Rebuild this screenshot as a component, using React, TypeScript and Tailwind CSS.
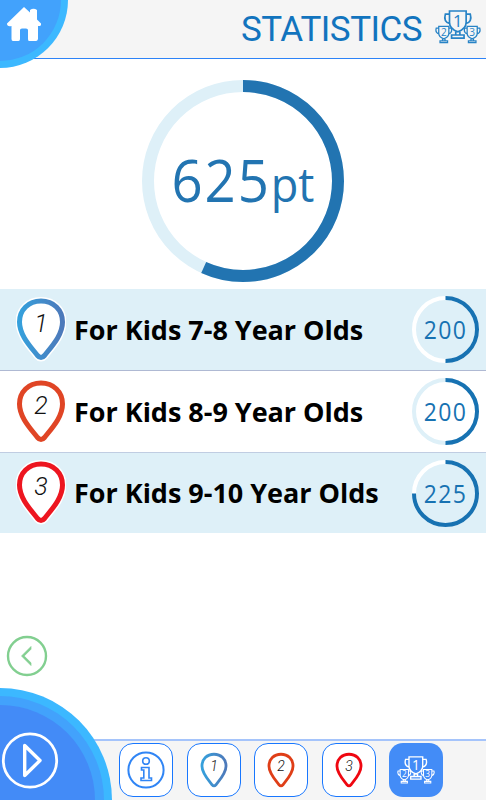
const SANS = "font-['Open_Sans','Noto_Sans',sans-serif]";

function Pin({ n, color, className, halo, gradient }: { n: number; color: string; className: string; halo?: boolean; gradient?: string }) {
  const d = "M25 4C12.4 4 3.5 13 3.5 25C3.5 38 14 49 21.5 58.5Q25 62.5 28.5 58.5C36 49 46.5 38 46.5 25C46.5 13 37.6 4 25 4Z";
  return (
    <svg viewBox="0 0 50 66" className={className}>
      {gradient && (
        <defs>
          <linearGradient id={gradient} x1="0" x2="1" y1="0" y2="0">
            <stop offset="0" stopColor="#35a0dc" />
            <stop offset="1" stopColor="#4d79ba" />
          </linearGradient>
        </defs>
      )}
      {halo && <path d={d} fill="white" stroke="white" strokeWidth="8" />}
      <path d={d} fill="white" stroke={gradient ? `url(#${gradient})` : color} strokeWidth="5" />
      <text x="25" y="34.5" textAnchor="middle" fontFamily="Roboto, sans-serif" fontWeight="300" fontStyle="italic" fontSize="25" fill="#111">{n}</text>
    </svg>
  );
}

function Cup({ x, y, s, n, w }: { x: number; y: number; s: number; n: number; w: number }) {
  return (
    <g transform={`translate(${x} ${y}) scale(${s})`} fill="none" stroke="currentColor" strokeWidth={w}>
      <path d="M5 1H21V12Q21 18 13 21Q5 18 5 12Z M5 4H1Q-1 11 5 13M21 4H25Q27 11 21 13M11 21V24H15V21M7 24H19V27H7Z" />
      <text x="13" y="16" textAnchor="middle" fontFamily="Open Sans, sans-serif" fontSize="16" fill="currentColor" stroke="none">{n}</text>
    </g>
  );
}

function Trophies({ className }: { className: string }) {
  return (
    <svg viewBox="0 0 46 34" className={className}>
      <Cup x={9.3} y={0} s={1.04} n={1} w={1.6} />
      <Cup x={0.6} y={15.7} s={0.63} n={2} w={2} />
      <Cup x={29} y={15.7} s={0.63} n={3} w={2} />
    </svg>
  );
}

function Ring({ size, width, part, track, color }: { size: number; width: number; part: number; track: string; color: string }) {
  const r = (size - width) / 2;
  return (
    <svg viewBox={`0 0 ${size} ${size}`} className="col-start-1 row-start-1 size-full -rotate-90">
      <circle cx={size / 2} cy={size / 2} r={r} fill="none" stroke={track} strokeWidth={width} />
      <circle cx={size / 2} cy={size / 2} r={r} fill="none" stroke={color} strokeWidth={width} pathLength="100" strokeDasharray={`${part} 100`} />
    </svg>
  );
}

const rows = [
  { n: 1, label: "For Kids 7-8 Year Olds", score: 200, part: 50, color: "#4189c7", track: "#ffffff", row: "h-[82px] bg-[#def0f8] border-b border-[#afb9d3]", halo: true },
  { n: 2, label: "For Kids 8-9 Year Olds", score: 200, part: 50, color: "#e04525", track: "#def0f8", row: "h-[82px] bg-white border-b border-[#c0cde2]", halo: false },
  { n: 3, label: "For Kids 9-10 Year Olds", score: 225, part: 75, color: "#ed1620", track: "#ffffff", row: "h-[80px] bg-[#def0f8]", halo: true },
];

export default function App() {
  return (
    <div className={`relative flex h-[800px] w-[486px] flex-col overflow-hidden bg-white ${SANS}`}>
      <header className="flex h-[59px] shrink-0 items-start justify-end border-b border-[#2d83f7] bg-[#f5f5f5] pr-[5px]">
        <h1 className="mt-[8px] mr-[12px] w-[182px] whitespace-nowrap font-['Roboto',sans-serif] text-[35px] leading-[44px] font-normal tracking-[-0.5px] text-[#1274be]">STATISTICS</h1>
        <Trophies className="mt-[10px] h-[34px] w-[46px] text-[#2783c6]" />
      </header>

      <main className="flex flex-1 flex-col">
        <section className="flex h-[230px] items-start justify-center pt-[21px]">
          <div className="grid size-[202px] place-items-center">
            <Ring size={202} width={12} part={56.8} track="#def0f8" color="#2274b1" />
            <div className="col-start-1 row-start-1 mb-[2px] scale-x-[0.94] whitespace-nowrap text-[58px] leading-none tracking-[2px] text-[#2274b1]">
              625<span className="text-[48px] tracking-normal">pt</span>
            </div>
          </div>
        </section>
        <ul>
          {rows.map((r) => (
            <li key={r.n} className={`flex items-center pr-[7px] pl-[16px] ${r.row}`}>
              <Pin n={r.n} color={r.color} halo={r.halo} gradient={r.n === 1 ? "pinRow" : undefined} className="h-[66px] w-[50px] shrink-0" />
              <span className="mt-px ml-[8px] flex-1 whitespace-nowrap text-[27px] font-bold tracking-[-0.02px] text-black">{r.label}</span>
              <div className="grid size-[67px] place-items-center">
                <Ring size={67} width={4} part={r.part} track={r.track} color="#1772b2" />
                <span className="col-start-1 row-start-1 scale-x-[0.92] pl-px text-[25px] leading-none tracking-[1.4px] text-[#1772b2]">{r.score}</span>
              </div>
            </li>
          ))}
        </ul>
        <button className="mt-[102px] ml-[6px] size-[42px]" aria-label="Back">
          <svg viewBox="0 0 42 42" fill="none" stroke="#82cf90" className="size-full">
            <circle cx="21" cy="21" r="19" strokeWidth="2.4" />
            <path d="M25 11.500V14.200L18.200 21L25 27.800V30.500L15.500 21Z" fill="#82cf90" strokeWidth="0.7" />
          </svg>
        </button>
      </main>

      <footer className="flex h-[61px] shrink-0 items-start gap-[13.5px] border-t-2 border-[#a5c4fb] bg-[#f5f5f5] pt-[2px] pl-[119px]">
        <button className="grid size-[54px] shrink-0 place-items-center rounded-[14px] border border-[#1877ff] bg-white" aria-label="Info">
          <svg viewBox="0 0 38 38" className="size-[38px]" fill="none" stroke="#3085f5" strokeWidth="1.6">
            <circle cx="19" cy="19" r="17.6" strokeWidth="2" />
            <circle cx="19" cy="10" r="3.3" />
            <path d="M14.500 16.500H22V27H24.500V29.500H14V27H16.800V19H14.500Z" />
          </svg>
        </button>
        {rows.map((r) => (
          <button key={r.n} className="grid size-[54px] shrink-0 place-items-center rounded-[14px] border border-[#1877ff] bg-white">
            <Pin n={r.n} color={["", "#df3e17", "#ef0710"][r.n - 1]} gradient={r.n === 1 ? "pinNav" : undefined} className="h-[37px] w-[28px]" />
          </button>
        ))}
        <button className="grid size-[54px] shrink-0 place-items-center rounded-[14px] bg-[#438cf7]" aria-label="Statistics">
          <Trophies className="h-[28px] w-[38px] text-white" />
        </button>
      </footer>

      <svg viewBox="0 0 70 70" className="absolute top-0 left-0 size-[70px]" aria-label="Home">
        <circle cx="0" cy="0" r="68" fill="#3cb8ff" />
        <circle cx="0" cy="0" r="61" fill="#42a2fc" />
        <path d="M24 7L30 12.500V10Q33.500 7.500 37 10V19.500L41 23.500Q41.500 26.500 38 26V39Q37.500 41 36 41H29Q28 41 28 39V30Q28 28.500 26 28.500H22Q20 28.500 20 30V39Q20 41 18.500 41H13Q11.500 41 11.500 39V26Q7 27 7 23.500Z" fill="white" />
      </svg>
      <svg viewBox="0 0 113 113" className="absolute bottom-0 left-0 size-[113px]" aria-label="Play">
        <circle cx="0" cy="113" r="112" fill="#3cb8ff" />
        <circle cx="0" cy="113" r="104" fill="#42a2fc" />
        <circle cx="0" cy="113" r="95" fill="#438bf7" />
        <circle cx="30" cy="73.500" r="26.700" fill="none" stroke="white" strokeWidth="2.800" />
        <path d="M24.700 58.500V88.500L40 73.500Z" fill="none" stroke="white" strokeWidth="3.400" strokeLinejoin="round" />
      </svg>
    </div>
  );
}
